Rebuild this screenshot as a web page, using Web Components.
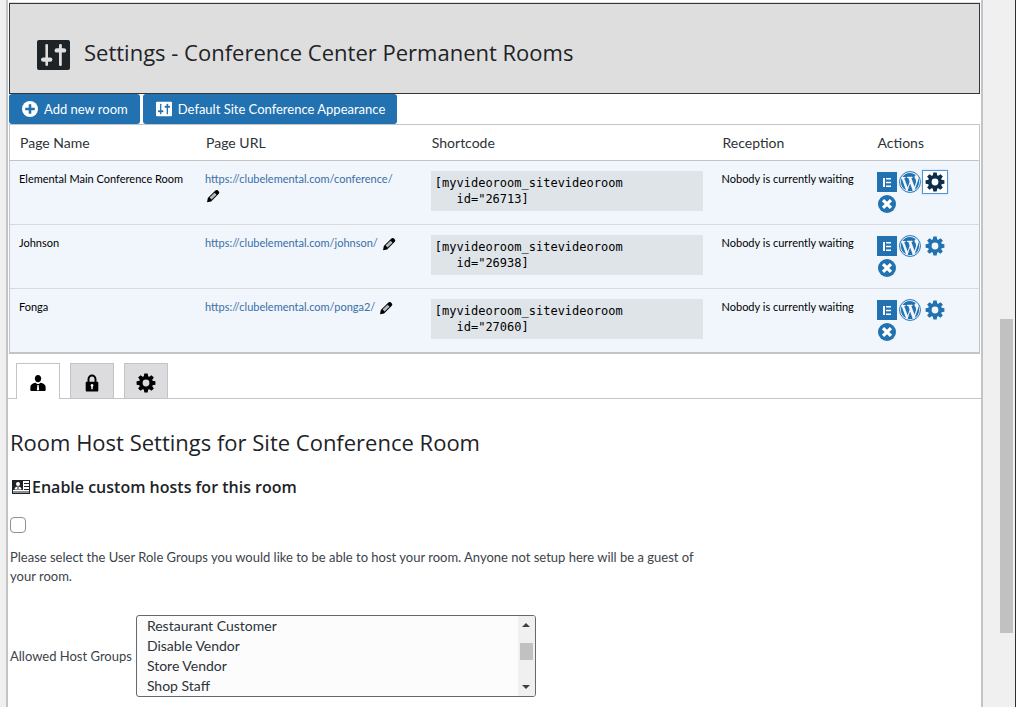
<!DOCTYPE html>
<html lang="en">
<head>
<meta charset="utf-8">
<title>Settings - Conference Center Permanent Rooms</title>
<style>
  html, body { margin: 0; height: 100%; }
  body {
    background: #f0f0f1;
    color: #3c434a;
    font: 13px/19px Lato, "Open Sans", sans-serif;
    --heading: "Open Sans", "Noto Sans", sans-serif;
    --blue: #2271b1;
    --line: #c3c4c7;
    overflow: hidden;
  }
</style>
</head>
<body>
<app-shell>
  <page-header>Settings - Conference Center Permanent Rooms</page-header>
  <button-bar>
    <action-button icon="plus">Add new room</action-button>
    <action-button icon="sliders">Default Site Conference Appearance</action-button>
  </button-bar>
  <rooms-table></rooms-table>
  <settings-tabs></settings-tabs>
  <host-settings></host-settings>
</app-shell>

<script>
const TEETH = [0, 45, 90, 135, 180, 225, 270, 315]
  .map(a => `<path d="M7.8 4L8.300 .6h3.400l.5 3.400z" transform="rotate(${a} 10 10)"/>`).join('');

const ICONS = {
  sliders: ['0 0 33 30', `<rect width="33" height="30" rx="2"/>
    <g fill="var(--hole)"><rect x="8.4" y="4" width="2.6" height="22" rx="1.2"/><rect x="4" y="17.4" width="11.4" height="4.4" rx="2.2"/>
    <rect x="22" y="4" width="2.8" height="22" rx="1.2"/><rect x="17.6" y="8.2" width="11.6" height="4.4" rx="2.2"/></g>`],
  plus: ['0 0 20 20', `<circle cx="10" cy="10" r="10"/><path d="M8.4 4h3.2v4.4H16v3.2h-4.4V16H8.4v-4.4H4V8.4h4.4z" fill="var(--hole)"/>`],
  pencil: ['0 0 20 20', `<path fill-rule="evenodd" d="M13.4 2.2c1-1 2.2-1.2 3.2-.3l1.8 1.8c.9 1 .8 2.100-.2 3.200L7.300 17.700 1.500 18.800 2.600 13zM12.200 5.300L5.200 12.300 8 15.100 15 8.100z"/><path d="M6 13.300l7-7M7.500 14.700l7-7" stroke="currentColor" stroke-width=".7"/>`],
  elementor: ['0 0 20 20', `<rect width="20" height="20"/><path d="M6 6h2v9H6zM9 6h5v1.500H9zM9 9.700h5v1.500H9zM9 13.500h5V15H9z" fill="var(--hole)"/>`],
  wordpress: ['0 0 20 20', `<circle cx="10" cy="10" r="9.500" fill="none" stroke="currentColor" stroke-width=".9"/>
    <g transform="translate(.7 .7) scale(.93)"><path d="M7.780 15.370L4.370 6.220c.55-.02 1.170-.08 1.170-.08.5-.06.44-1.130-.06-1.110 0 0-1.450.11-2.370.11-.18 0-.37 0-.58-.01C4.120 2.690 6.870 1.110 10 1.110c2.330 0 4.450.87 6.050 2.340-.68-.11-1.650.39-1.650 1.580 0 .74.45 1.360.9 2.100.35.61.55 1.360.55 2.460 0 1.490-1.400 5-1.400 5l-3.030-8.370c.54-.02.82-.17.82-.17.5-.05.44-1.250-.06-1.220 0 0-1.440.12-2.380.12-.87 0-2.330-.12-2.330-.12-.5-.03-.56 1.200-.06 1.220l.92.08 1.260 3.410zM17.410 10c.24-.64.74-1.870.43-4.250.7 1.290 1.050 2.710 1.050 4.250 0 3.290-1.730 6.240-4.400 7.780.97-2.590 1.940-5.200 2.920-7.780zM6.100 18.090C3.120 16.650 1.110 13.530 1.110 10c0-1.300.23-2.480.72-3.590C3.250 10.300 4.670 14.200 6.100 18.090zm4.030-6.630l2.580 6.980c-.86.29-1.760.45-2.710.45-.79 0-1.570-.11-2.290-.33.81-2.380 1.620-4.740 2.420-7.100z"/></g>`],
  gear: ['0 0 20 20', `<circle cx="10" cy="10" r="5.200" fill="none" stroke="currentColor" stroke-width="3.600"/>${TEETH}`],
  dismiss: ['0 0 20 20', `<circle cx="10" cy="10" r="10"/><path d="M5.600 5.600l8.800 8.800M14.400 5.600l-8.800 8.800" stroke="var(--hole)" stroke-width="3.600"/>`],
  person: ['0 0 20 20', `<path d="M10 1c2.200 0 3.500 1.700 3.500 3.900S12 9.300 10 9.300 6.500 7.100 6.500 4.900 7.800 1 10 1z"/><path d="M7.200 9.600L9 11.200h2l1.800-1.600c3.200.5 5.700 2 5.700 5v3c0 .8-.6 1.400-1.400 1.400H2.900c-.8 0-1.400-.6-1.400-1.400v-3c0-3 2.500-4.500 5.700-5z"/><path d="M9.300 12.200h1.400l.6 5.800H8.700z" fill="var(--hole)"/>`],
  lock: ['0 0 20 20', `<path d="M6.100 9V6a3.900 4.400 0 0 1 7.800 0v3" fill="none" stroke="currentColor" stroke-width="2.200"/><rect x="3" y="8.600" width="14" height="10.800" rx="1"/><path d="M8.400 12.800a1.600 1.600 0 1 1 2.400 1.400V17H9.200v-2.800z" fill="var(--hole)"/>`],
  card: ['0 0 18 14', `<rect x=".5" y=".5" width="17" height="13" fill="#fff" stroke="currentColor"/><rect x="1" y="1" width="10" height="9"/><circle cx="6" cy="4" r="2" fill="#fff"/><path d="M2.500 9.500c0-2 1.500-3 3.500-3s3.500 1 3.500 3z" fill="#fff"/><path d="M5.500 6.500h1v2.500h-1zM12 3h5v1h-5zM12 6h5v1h-5zM12 9h5v1h-5zM1 11.500h16v1H1z"/>`],
};

class Base extends HTMLElement {
  constructor() { super(); this.attachShadow({ mode: 'open' }); }
  connectedCallback() { this.shadowRoot.innerHTML = `<style>*{box-sizing:border-box}${this.css()}</style>${this.html()}`; }
}

customElements.define('ui-icon', class extends Base {
  css() { return `:host{display:inline-flex;flex:none;width:16px;height:16px;--hole:#fff}svg{width:100%;height:100%;fill:currentColor;display:block}`; }
  html() { const [box, art] = ICONS[this.getAttribute('name')]; return `<svg viewBox="${box}" aria-hidden="true">${art}</svg>`; }
});

customElements.define('app-shell', class extends Base {
  css() { return `
    :host{display:flex;height:100vh;padding-left:6px;border-right:1px solid #2c2f33}
    main{flex:1;min-width:0;background:#fff;border:solid var(--line);border-width:0 2px;padding:2px 1px 0;overflow:hidden}
    .gutter{flex:none;width:17px}
    .bar{flex:none;width:15px;display:flex;flex-direction:column}
    .before{flex:319}.thumb{flex:314;background:#c1c1c1;width:13px}.after{flex:74}`; }
  html() { return `<main><slot></slot></main><div class="gutter"></div><div class="bar"><div class="before"></div><div class="thumb"></div><div class="after"></div></div>`; }
});

customElements.define('page-header', class extends Base {
  css() { return `
    :host{display:block;border-top:1px solid #dcdcde}
    header{display:flex;align-items:center;gap:14px;padding:30px 27px;background:#dedede;border:1px solid #32373c;height:91px}
    ui-icon{width:33px;height:30px;color:#1d2327;margin-top:12px;--hole:#dedede}
    h1{margin:6px 0 0;font:400 22px/30px var(--heading);color:#1d2327}`; }
  html() { return `<header><ui-icon name="sliders"></ui-icon><h1><slot></slot></h1></header>`; }
});

customElements.define('button-bar', class extends Base {
  css() { return `:host{display:flex;gap:3px}`; }
  html() { return `<slot></slot>`; }
});

customElements.define('action-button', class extends Base {
  css() { return `
    :host{display:block}
    button{display:flex;align-items:center;gap:6px;height:30px;padding:0 12px 0 13px;border:0;border-radius:3px;background:var(--blue);color:#fff;font:inherit;white-space:nowrap}
    ui-icon{--hole:var(--blue)}`; }
  html() { return `<button type="button"><ui-icon name="${this.getAttribute('icon')}"></ui-icon><slot></slot></button>`; }
});

customElements.define('room-actions', class extends Base {
  css() { return `
    :host{display:flex;flex-wrap:wrap;gap:0 1px;color:var(--blue)}
    button{display:flex;align-items:center;justify-content:center;width:22px;height:22px;padding:0;border:0;background:none;color:inherit}
    ui-icon{width:18px;height:18px}
    .lg{width:22px;height:22px}.md{width:20px;height:20px}
    .cog{width:24px;margin-left:1px}
    .active{color:#0a2e4c;background:#fff;outline:1px solid #4f94d4;box-shadow:0 0 2px 1px #b5d3ee}`; }
  html() { return `
    <button type="button" aria-label="Edit in Elementor"><ui-icon class="md" name="elementor"></ui-icon></button>
    <button type="button" aria-label="Edit in WordPress"><ui-icon class="lg" name="wordpress"></ui-icon></button>
    <button type="button" aria-label="Room settings" class="cog ${this.hasAttribute('active') ? 'active' : ''}"><ui-icon class="md" name="gear"></ui-icon></button>
    <button type="button" aria-label="Delete room"><ui-icon name="dismiss"></ui-icon></button>`; }
});

customElements.define('rooms-table', class extends Base {
  css() { return `
    :host{display:block;border:1px solid var(--line);border-bottom-width:2px}
    table{width:100%;border-collapse:separate;border-spacing:0;table-layout:fixed}
    th{height:36px;padding:0 10px;text-align:left;font-weight:400;font-size:14px;color:#2c3338;border-bottom:1px solid var(--line)}
    td{height:64px;padding:10px 10px 9px 9px;vertical-align:top;font-size:11px;line-height:16px;color:#000;background:#f0f6fc;border-bottom:1px solid #d5dae0}
    tbody tr:last-child td{border-bottom:0;height:63px}
    .n{width:19.2%}.u{width:23.3%}.s{width:30%}.r{width:16%}.a{width:11.5%}
    td:nth-child(2){padding-right:16px}
    td:last-child{padding-right:20px;padding-left:8px}
    a{color:#3a6ea5;text-decoration:none}
    ui-icon{width:14px;height:14px;margin:0 1px;vertical-align:-4px}
    code{display:block;padding:4px;background:#dfe4e9;font:12px/16px "DejaVu Sans Mono",monospace;white-space:pre}`; }
  html() {
    const rooms = [
      ['Elemental Main Conference Room', 'conference', '26713', 'active'],
      ['Johnson', 'johnson', '26938', ''],
      ['Fonga', 'ponga2', '27060', ''],
    ];
    return `<table>
      <thead><tr><th class="n">Page Name</th><th class="u">Page URL</th><th class="s">Shortcode</th><th class="r">Reception</th><th class="a">Actions</th></tr></thead>
      <tbody>${rooms.map(([name, slug, id, on]) => `<tr>
        <td>${name}</td>
        <td><a href="#${slug}">https://clubelemental.com/${slug}/</a> <ui-icon name="pencil"></ui-icon></td>
        <td><code>[myvideoroom_sitevideoroom\n   id="${id}]</code></td>
        <td>Nobody is currently waiting</td>
        <td><room-actions ${on}></room-actions></td></tr>`).join('')}</tbody></table>`;
  }
});

customElements.define('settings-tabs', class extends Base {
  css() { return `
    :host{display:block;padding-top:9px}
    nav{display:flex;gap:10px;padding-left:8px;border-bottom:1px solid var(--line);margin:0 -1px}
    button{display:flex;align-items:center;justify-content:center;width:44px;height:35px;padding:3px 0 0;border:1px solid var(--line);border-bottom:0;background:#dcdcde;color:#000}
    button[aria-selected=true]{background:#fff;height:36px;margin-bottom:-1px}
    ui-icon{width:18px;height:18px}
    .cog{width:20px;height:20px}`; }
  html() { return `<nav role="tablist">
    <button type="button" role="tab" aria-selected="true" aria-label="Room hosts"><ui-icon name="person"></ui-icon></button>
    <button type="button" role="tab" aria-selected="false" aria-label="Room permissions"><ui-icon name="lock"></ui-icon></button>
    <button type="button" role="tab" aria-selected="false" aria-label="Video settings"><ui-icon class="cog" name="gear"></ui-icon></button></nav>`; }
});

customElements.define('host-settings', class extends Base {
  css() { return `
    :host{display:block;padding:28px 1px 0}
    h2{margin:0;font:400 22px/30px var(--heading);color:#1d2327}
    h3{display:flex;align-items:center;gap:2px;margin:18px 0;font:600 16px/24px var(--heading);color:#1d2327;padding-left:2px}
    h3 ui-icon{width:18px;height:14px}
    input{display:block;appearance:none;width:16px;height:16px;margin:0;border:1px solid #8c8f94;border-radius:4px;background:#fff}
    p{margin:15px 0 29px;max-width:700px}
    .field{display:flex;align-items:center;gap:4px}
    list-frame{flex:0 1 400px}`; }
  html() { return `
    <h2>Room Host Settings for Site Conference Room</h2>
    <h3 id="hosts"><ui-icon name="card"></ui-icon>Enable custom hosts for this room</h3>
    <input type="checkbox" aria-labelledby="hosts">
    <p>Please select the User Role Groups you would like to be able to host your room. Anyone not setup here will be a guest of your room.</p>
    <div class="field"><label id="groups">Allowed Host Groups</label><list-frame label="Allowed Host Groups"></list-frame></div>`; }
});

customElements.define('list-frame', class extends Base {
  css() { return `
    :host{display:flex;border:1px solid #646970;border-radius:3px;overflow:hidden;background:#fcfcfc}
    select{flex:1;min-width:0;height:80px;padding:0;border:0;background:none;color:#2c3338;font:14px/20px Lato,"Open Sans",sans-serif;overflow:hidden;outline:0}
    option{height:20px;min-height:20px;padding:1px 10px 0;line-height:20px}
    .bar{flex:none;width:17px;background:#f0f0f0;display:flex;flex-direction:column;align-items:center;padding:7px 0}
    .bar i{border:4px solid transparent}
    .up{border-bottom-color:#404040!important;border-top:0!important}
    .down{border-top-color:#404040!important;border-bottom:0!important;margin-top:auto}
    .bar b{width:13px;height:17px;margin-top:16px;background:#c1c1c1}`; }
  html() { return `<select multiple size="4" aria-label="${this.getAttribute('label')}">
    <option>Restaurant Customer</option><option>Disable Vendor</option><option>Store Vendor</option><option>Shop Staff</option></select>
    <div class="bar"><i class="up"></i><b></b><i class="down"></i></div>`; }
});
</script>
</body>
</html>
